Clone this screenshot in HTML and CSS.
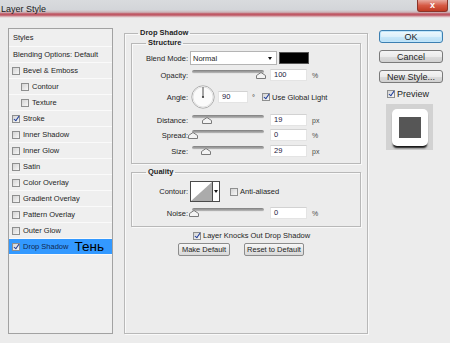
FILE: index.html
```html
<!DOCTYPE html>
<html lang="en">
<head>
    <meta charset="UTF-8">
    <meta name="viewport" content="width=device-width, initial-scale=1.0">
    <title>Layer Style</title>
    <link rel="stylesheet" href="styles.css">
</head>
<body>

    <div class="titlebar">
        <span class="title">Layer Style</span>
        <span class="close">x</span>
    </div>

    <div class="dialog">
        <!-- Styles list -->
        <ul class="styles">
            <li class="head">Styles</li>
            <li class="blend">Blending Options: Default</li>
            <li><span class="check"></span>Bevel &amp; Emboss</li>
            <li class="sub"><span class="check"></span>Contour</li>
            <li class="sub"><span class="check"></span>Texture</li>
            <li><span class="check on"></span>Stroke</li>
            <li><span class="check"></span>Inner Shadow</li>
            <li><span class="check"></span>Inner Glow</li>
            <li><span class="check"></span>Satin</li>
            <li><span class="check"></span>Color Overlay</li>
            <li><span class="check"></span>Gradient Overlay</li>
            <li><span class="check"></span>Pattern Overlay</li>
            <li><span class="check"></span>Outer Glow</li>
            <li class="selected"><span class="check on"></span>Drop Shadow<span class="note">Тень</span></li>
        </ul>

        <!-- Drop Shadow settings -->
        <fieldset class="effect">
            <legend>Drop Shadow</legend>

            <fieldset class="group structure">
                <legend>Structure</legend>

                <div class="row row-blend">
                    <span class="label">Blend Mode:</span>
                    <div class="select">Normal<span class="arrow"></span></div>
                    <span class="swatch"></span>
                </div>

                <div class="row row-opacity">
                    <span class="label">Opacity:</span>
                    <div class="slider">
                        <div class="track"></div>
                        <svg class="knob" style="left: 64px" width="10" height="7" viewBox="0 0 10 7"><polygon points="0.5,6.5 0.5,3.5 5,0.5 9.5,3.5 9.5,6.5" fill="#f3f3f3" stroke="#7a7a7a"/></svg>
                    </div>
                    <span class="field">100</span>
                    <span class="unit">%</span>
                </div>

                <div class="row row-angle">
                    <span class="label">Angle:</span>
                    <svg class="dial" width="24" height="24" viewBox="0 0 24 24">
                        <circle cx="12" cy="12" r="11.2" fill="#fbfbfb" stroke="#9c9c9c" stroke-width="0.8"/>
                        <circle cx="12" cy="12" r="10" fill="none" stroke="#e2e2e2" stroke-width="1"/>
                        <line x1="12" y1="12" x2="12" y2="2" stroke="#3a3a3a" stroke-width="0.9"/>
                        <circle cx="12" cy="12" r="1.1" fill="#3a3a3a"/>
                    </svg>
                    <span class="field angle">90</span>
                    <span class="degree">°</span>
                    <span class="check on global"></span>
                    <span class="check-text">Use Global Light</span>
                </div>

                <div class="row row-distance">
                    <span class="label">Distance:</span>
                    <div class="slider">
                        <div class="track"></div>
                        <svg class="knob" style="left: 10px" width="10" height="7" viewBox="0 0 10 7"><polygon points="0.5,6.5 0.5,3.5 5,0.5 9.5,3.5 9.5,6.5" fill="#f3f3f3" stroke="#7a7a7a"/></svg>
                    </div>
                    <span class="field">19</span>
                    <span class="unit">px</span>
                </div>

                <div class="row row-spread">
                    <span class="label">Spread:</span>
                    <div class="slider">
                        <div class="track"></div>
                        <svg class="knob" style="left: -4px" width="10" height="7" viewBox="0 0 10 7"><polygon points="0.5,6.5 0.5,3.5 5,0.5 9.5,3.5 9.5,6.5" fill="#f3f3f3" stroke="#7a7a7a"/></svg>
                    </div>
                    <span class="field">0</span>
                    <span class="unit">%</span>
                </div>

                <div class="row row-size">
                    <span class="label">Size:</span>
                    <div class="slider">
                        <div class="track"></div>
                        <svg class="knob" style="left: 9px" width="10" height="7" viewBox="0 0 10 7"><polygon points="0.5,6.5 0.5,3.5 5,0.5 9.5,3.5 9.5,6.5" fill="#f3f3f3" stroke="#7a7a7a"/></svg>
                    </div>
                    <span class="field">29</span>
                    <span class="unit">px</span>
                </div>
            </fieldset>

            <fieldset class="group quality">
                <legend>Quality</legend>

                <div class="row row-contour">
                    <span class="label">Contour:</span>
                    <div class="contour">
                        <svg width="21" height="19" viewBox="0 0 21 19">
                            <rect width="21" height="19" fill="#fff"/>
                            <polygon points="0,19 21,0 21,19" fill="#ababab"/>
                        </svg>
                        <span class="contour-drop"><span class="arrow"></span></span>
                    </div>
                    <span class="check anti"></span>
                    <span class="check-text">Anti-aliased</span>
                </div>

                <div class="row row-noise">
                    <span class="label">Noise:</span>
                    <div class="slider">
                        <div class="track"></div>
                        <svg class="knob" style="left: -3px" width="10" height="7" viewBox="0 0 10 7"><polygon points="0.5,6.5 0.5,3.5 5,0.5 9.5,3.5 9.5,6.5" fill="#f3f3f3" stroke="#7a7a7a"/></svg>
                    </div>
                    <span class="field">0</span>
                    <span class="unit">%</span>
                </div>
            </fieldset>

            <div class="knockout">
                <span class="check on"></span>
                <span class="check-text">Layer Knocks Out Drop Shadow</span>
            </div>

            <div class="defaults">
                <button class="small make">Make Default</button>
                <button class="small reset">Reset to Default</button>
            </div>
        </fieldset>

        <!-- Dialog buttons -->
        <div class="actions">
            <button class="big ok">OK</button>
            <button class="big">Cancel</button>
            <button class="big">New Style...</button>
            <div class="preview-check">
                <span class="check on"></span>
                <span>Preview</span>
            </div>
            <div class="preview">
                <div class="preview-tile">
                    <div class="preview-inner"></div>
                </div>
            </div>
        </div>
    </div>

</body>
</html>
```

FILE: styles.css
```css
/* General */
body {
    margin: 0;
    width: 450px;
    height: 343px;
    overflow: hidden;
    background-color: #ececec;
    font-family: "Liberation Sans", Arial, sans-serif;
    font-size: 7.5px;
    color: #1e1e1e;
}

/* Window title bar */
.titlebar {
    height: 18px;
    display: flex;
    justify-content: space-between;
    background: linear-gradient(to bottom, #d9dbde 0%, #d3d5d9 55%, #cdb3b8 68%, #bd4d5b 78%, #c56f7a 86%, #e0c6c9 94%, #ececec 100%);
}

.title {
    font-size: 9px;
    padding: 4px 0 0 1px;
    color: #1b1b1b;
}

.close {
    width: 31px;
    height: 12px;
    margin-right: 2px;
    box-sizing: border-box;
    background: linear-gradient(to bottom, #e8aa9f, #d65a45 50%, #c03a22);
    border: 1px solid #8a3428;
    border-top: none;
    border-radius: 0 0 3px 3px;
    color: #fff;
    font-weight: bold;
    font-size: 9px;
    line-height: 10px;
    text-align: center;
}

.dialog {
    display: flex;
    align-items: flex-start;
    padding: 10px 0 0 8px;
}

/* Styles list */
.styles {
    width: 105px;
    height: 306px;
    box-sizing: border-box;
    margin: 0;
    padding: 0;
    list-style: none;
    border: 1px solid #a2a2a2;
    background-color: #efefef;
}

.styles li {
    height: 16px;
    box-sizing: border-box;
    display: flex;
    align-items: center;
    padding-left: 3px;
    border-bottom: 1px solid #fafafa;
}

.styles li.head {
    height: 18px;
    padding-left: 4px;
}

.styles li.blend {
    padding-left: 4px;
}

.styles li.sub {
    padding-left: 12px;
}

.styles li.selected {
    background-color: #3399ff;
    color: #10284f;
}

.styles li .check {
    margin-right: 3px;
}

.note {
    margin-left: 6px;
    font-size: 13.5px;
    line-height: 1;
    color: #000;
}

/* Checkboxes */
.check {
    position: relative;
    width: 8px;
    height: 8px;
    box-sizing: border-box;
    flex-shrink: 0;
    border: 1px solid #8e8f8f;
    background: linear-gradient(to bottom right, #d4d4d4, #f7f7f7);
}

.check.on::after {
    content: "";
    position: absolute;
    left: 2px;
    top: -1px;
    width: 2px;
    height: 5px;
    border: solid #22409c;
    border-width: 0 1.4px 1.4px 0;
    transform: rotate(35deg);
}

.check-text {
    margin-left: 2px;
}

/* Group boxes */
fieldset {
    margin: 0;
    min-width: 0;
    border: 1px solid #b8b8b8;
    box-shadow: inset 1px 1px 0 #f9f9f9, 1px 1px 0 #f9f9f9;
}

legend {
    font-weight: bold;
    line-height: 10px;
    padding: 0 2px;
}

.effect {
    width: 244px;
    height: 306px;
    box-sizing: border-box;
    margin-left: 11px;
    padding: 0 6px;
}

.effect > legend {
    margin-left: 7px;
}

.group {
    padding: 0 0 6px 0;
}

.group > legend {
    margin-left: 14px;
}

.quality {
    margin-top: 3px;
    padding-bottom: 7px;
}

/* Setting rows */
.row {
    display: flex;
    align-items: center;
    height: 12px;
}

.label {
    width: 56px;
    flex-shrink: 0;
    text-align: right;
}

.row-blend { height: 14px; margin-top: 3px; }
.row-opacity { margin-top: 4px; }
.row-angle { height: 24px; margin-top: 4px; }
.row-distance { margin-top: 5px; }
.row-spread { margin-top: 3px; }
.row-size { margin-top: 4px; }
.row-contour { height: 21px; margin-top: 4px; }
.row-noise { margin-top: 5px; }

.select {
    width: 87px;
    height: 14px;
    box-sizing: border-box;
    margin-left: 2px;
    padding: 0 4px 0 2px;
    display: flex;
    align-items: center;
    justify-content: space-between;
    background-color: #fff;
    border: 1px solid #b4b4b4;
}

.arrow {
    width: 0;
    height: 0;
    border-left: 2.5px solid transparent;
    border-right: 2.5px solid transparent;
    border-top: 3px solid #111;
}

.swatch {
    width: 30px;
    height: 12px;
    box-sizing: border-box;
    margin-left: 2px;
    background-color: #000;
    border: 1px solid #555;
}

.slider {
    position: relative;
    width: 72px;
    height: 12px;
    margin-left: 4px;
}

.track {
    height: 3px;
    margin-top: 1px;
    border-radius: 2px;
    background: linear-gradient(to bottom, #7e7e7e, #b9b9b9);
    border-bottom: 1px solid #e4e4e4;
}

.knob {
    position: absolute;
    top: 3px;
}

.field {
    width: 37px;
    height: 12px;
    box-sizing: border-box;
    margin-left: 6px;
    padding-left: 3px;
    line-height: 10px;
    background-color: #fff;
    border: 1px solid #e4e4e4;
    border-top-color: #d2d2d2;
    color: #1a2040;
}

.unit {
    margin-left: 5px;
    font-size: 7px;
    color: #4a4a4a;
}

.dial {
    margin-left: 3px;
}

.field.angle {
    width: 30px;
    margin-left: 3px;
}

.degree {
    margin-left: 4px;
    align-self: flex-start;
    margin-top: 8px;
}

.check.global {
    margin-left: 7px;
}

.contour {
    display: flex;
    width: 30px;
    height: 21px;
    box-sizing: border-box;
    margin-left: 2px;
    border: 1px solid #4a4a4a;
    background-color: #fff;
}

.contour-drop {
    width: 6px;
    display: flex;
    justify-content: center;
    align-items: center;
    border-left: 1px solid #4a4a4a;
}

.check.anti {
    margin-left: 10px;
}

.knockout {
    display: flex;
    align-items: center;
    height: 9px;
    margin-top: 4px;
    padding-left: 62px;
}

.defaults {
    display: flex;
    margin-top: 3px;
    padding-left: 47px;
}

/* Buttons */
button {
    font-family: "Liberation Sans", Arial, sans-serif;
    color: #1e1e1e;
    padding: 0;
    cursor: pointer;
}

.small {
    height: 13px;
    font-size: 7.5px;
    border: 1px solid #8c8c8c;
    border-radius: 2px;
    background: linear-gradient(to bottom, #f7f7f7, #e6e6e6 50%, #d9d9d9);
}

.small.make {
    width: 52px;
}

.small.reset {
    width: 60px;
    margin-left: 14px;
}

.actions {
    width: 64px;
    margin: 2px 0 0 11px;
    display: flex;
    flex-direction: column;
}

.big {
    height: 13px;
    margin-bottom: 7px;
    font-size: 9px;
    border: 1px solid #7a7a7a;
    border-radius: 3px;
    background: linear-gradient(to bottom, #f4f4f4 0%, #ebebeb 50%, #dcdcdc 51%, #d0d0d0 100%);
}

.big.ok {
    border-color: #3c7fb1;
    background: linear-gradient(to bottom, #eef8fd 0%, #ddf0fb 50%, #c9e8fa 51%, #b9dff5 100%);
    box-shadow: inset 0 0 0 1px #bfe5fb;
}

.preview-check {
    display: flex;
    align-items: center;
    gap: 2px;
    height: 9px;
    margin: -1px 0 0 8px;
    font-size: 9px;
}

.preview {
    width: 47px;
    height: 46px;
    box-sizing: border-box;
    margin: 6px 0 0 7px;
    padding: 5px 0 0 6px;
    background-color: #d2d2d2;
}

.preview-tile {
    width: 36px;
    height: 37px;
    display: flex;
    justify-content: center;
    align-items: center;
    border-radius: 5px;
    background-color: #fff;
    box-shadow: 0 3px 2px -1px #111;
}

.preview-inner {
    width: 22px;
    height: 21px;
    background-color: #565656;
}
```
